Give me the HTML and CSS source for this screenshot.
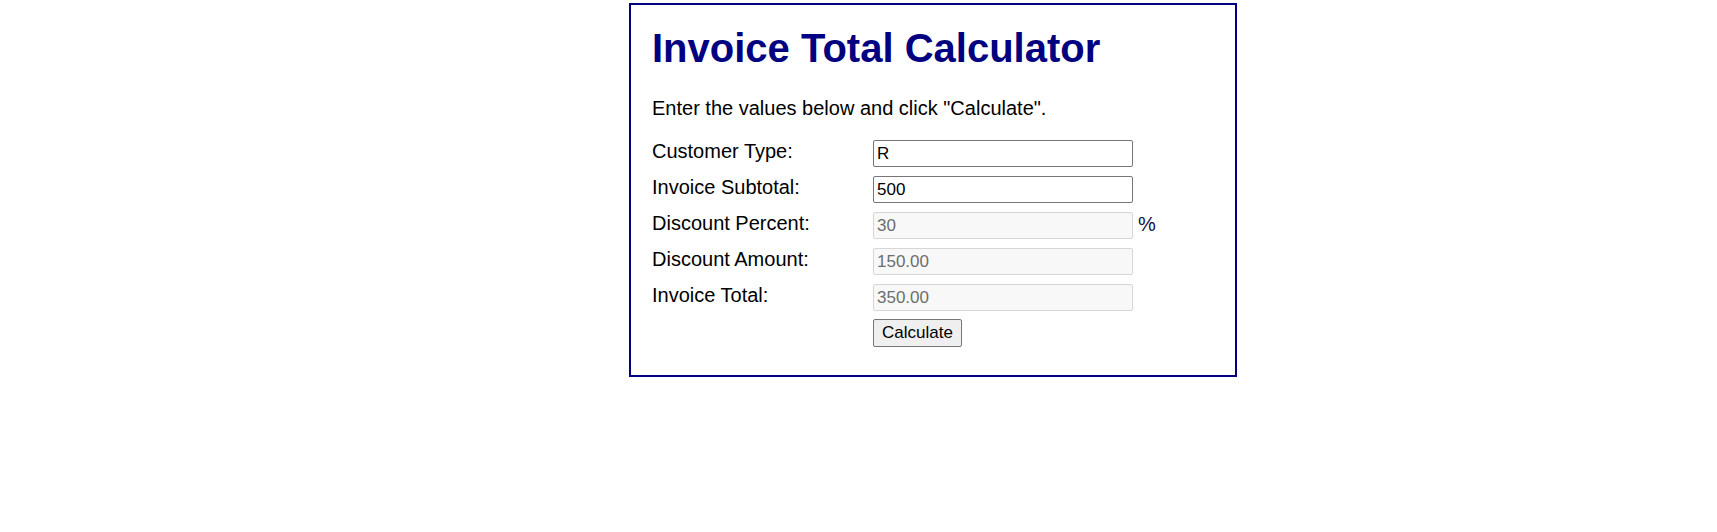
FILE: index.html
```html
<!DOCTYPE html>
<html>
<head>
<meta charset="utf-8">
<title>Invoice Total Calculator</title>
<link rel="stylesheet" href="styles.css">
</head>
<body>
<main class="calc">
  <h1 class="title">Invoice Total Calculator</h1>
  <p class="intro">Enter the values below and click "Calculate".</p>
  <div class="row">
    <label class="label" for="type">Customer Type:</label>
    <input class="field" id="type" type="text" value="R">
  </div>
  <div class="row">
    <label class="label" for="subtotal">Invoice Subtotal:</label>
    <input class="field" id="subtotal" type="text" value="500">
  </div>
  <div class="row">
    <label class="label" for="percent">Discount Percent:</label>
    <input class="field" id="percent" type="text" value="30" disabled>
    <span class="unit">%</span>
  </div>
  <div class="row">
    <label class="label" for="amount">Discount Amount:</label>
    <input class="field" id="amount" type="text" value="150.00" disabled>
  </div>
  <div class="row">
    <label class="label" for="total">Invoice Total:</label>
    <input class="field" id="total" type="text" value="350.00" disabled>
  </div>
  <div class="row row-btn">
    <span class="label"></span>
    <button class="btn" type="button">Calculate</button>
  </div>
</main>
</body>
</html>
```
FILE: styles.css
```css
html, body {
  margin: 0;
  padding: 0;
  background: #fff;
}
body {
  font-family: "Liberation Sans", Arial, sans-serif;
  font-size: 20px;
  color: #000;
}
.calc {
  box-sizing: border-box;
  width: 608px;
  height: 374px;
  margin: 3px 0 0 629px;
  border: 2px solid #000080;
  padding: 20px 20px 0 21px;
}
.title {
  margin: 0;
  font-size: 40px;
  line-height: 46px;
  font-weight: bold;
  color: #000080;
}
.intro {
  margin: 27px 0 0;
  line-height: 20px;
}
.row {
  display: flex;
  align-items: flex-start;
  height: 27px;
  margin-top: 9px;
}
.intro + .row {
  margin-top: 22px;
}
.label {
  display: block;
  width: 221px;
  flex: none;
  line-height: 20px;
  padding-top: 1px;
}
.field {
  box-sizing: border-box;
  width: 260px;
  height: 27px;
  margin: 0;
  padding: 1px 3px;
  font-family: "Liberation Sans", Arial, sans-serif;
  font-size: 17px;
  color: #000;
  background: #fff;
  border: 1px solid #767676;
  border-radius: 2px;
}
.field:disabled {
  background: #f8f8f8;
  border-color: #d6d6d6;
  color: #6d6d6d;
}
.unit {
  margin-left: 5px;
  line-height: 24px;
  color: #101040;
}
.row-btn {
  height: 28px;
  margin-top: 8px;
}
.btn {
  box-sizing: border-box;
  width: 89px;
  height: 28px;
  margin: 0;
  padding: 0 6px;
  font-family: "Liberation Sans", Arial, sans-serif;
  font-size: 17px;
  color: #000;
  background: #efefef;
  border: 1px solid #767676;
  border-radius: 2px;
}
```
